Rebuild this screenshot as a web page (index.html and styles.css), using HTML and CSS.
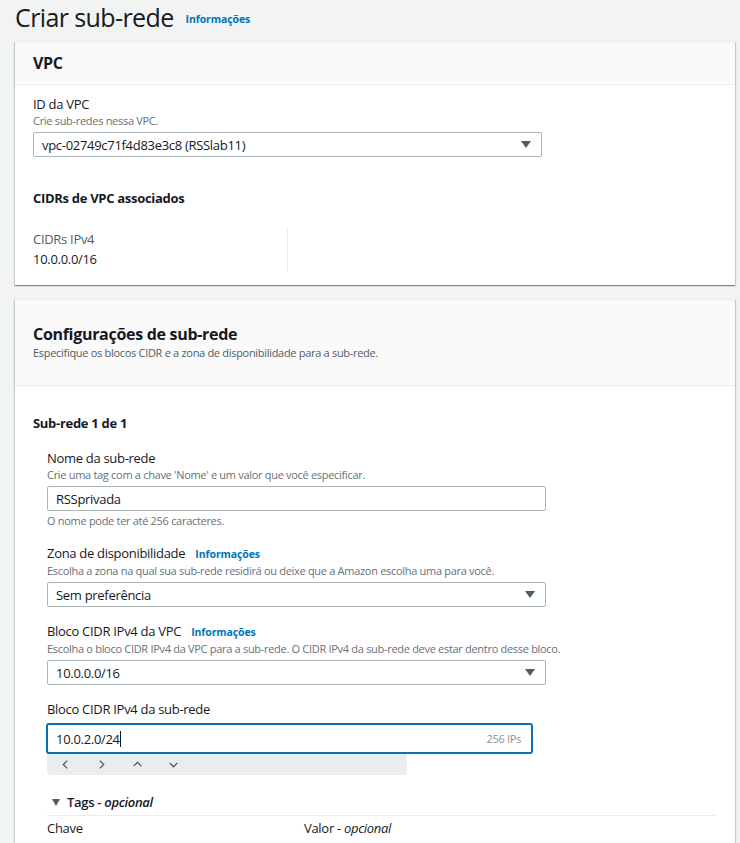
FILE: index.html
```html
<!DOCTYPE html>
<html lang="pt-BR">
<head>
<meta charset="utf-8">
<title>Criar sub-rede</title>
<link rel="stylesheet" href="styles.css">
</head>
<body>
<div class="page">
  <h1 class="title">Criar sub-rede <a class="info">Informações</a></h1>

  <section class="panel panel-vpc">
    <header class="panel-head"><h2>VPC</h2></header>
    <div class="panel-body">
      <div class="field">
        <div class="label">ID da VPC</div>
        <div class="desc">Crie sub-redes nessa VPC.</div>
        <div class="select"><span>vpc-02749c71f4d83e3c8 (RSSlab11)</span><i class="caret"></i></div>
      </div>
      <h3 class="sub-title">CIDRs de VPC associados</h3>
      <div class="kv">
        <div class="kv-col">
          <div class="kv-key">CIDRs IPv4</div>
          <div class="kv-val">10.0.0.0/16</div>
        </div>
      </div>
    </div>
  </section>

  <section class="panel panel-cfg">
    <header class="panel-head tall">
      <h2>Configurações de sub-rede</h2>
      <div class="head-desc">Especifique os blocos CIDR e a zona de disponibilidade para a sub-rede.</div>
    </header>
    <div class="panel-body">
      <h3 class="sub-title subnet">Sub-rede 1 de 1</h3>
      <div class="subnet-fields">
        <div class="field">
          <div class="label">Nome da sub-rede</div>
          <div class="desc">Crie uma tag com a chave 'Nome' e um valor que você especificar.</div>
          <div class="input">RSSprivada</div>
          <div class="hint">O nome pode ter até 256 caracteres.</div>
        </div>
        <div class="field">
          <div class="label">Zona de disponibilidade <a class="info">Informações</a></div>
          <div class="desc">Escolha a zona na qual sua sub-rede residirá ou deixe que a Amazon escolha uma para você.</div>
          <div class="select"><span>Sem preferência</span><i class="caret"></i></div>
        </div>
        <div class="field">
          <div class="label">Bloco CIDR IPv4 da VPC <a class="info">Informações</a></div>
          <div class="desc">Escolha o bloco CIDR IPv4 da VPC para a sub-rede. O CIDR IPv4 da sub-rede deve estar dentro desse bloco.</div>
          <div class="select"><span>10.0.0.0/16</span><i class="caret"></i></div>
        </div>
        <div class="field">
          <div class="label">Bloco CIDR IPv4 da sub-rede</div>
          <div class="input focus"><span>10.0.2.0/24<span class="cursor"></span></span><span class="ips">256 IPs</span></div>
          <div class="stepper">
            <svg viewBox="0 0 10 10"><path d="M6.5 1.5 3 5l3.5 3.5"/></svg>
            <svg viewBox="0 0 10 10"><path d="M3.5 1.5 7 5 3.5 8.5"/></svg>
            <svg viewBox="0 0 10 10"><path d="M1.5 6.5 5 3l3.5 3.5"/></svg>
            <svg viewBox="0 0 10 10"><path d="M1.5 3.5 5 7l3.5-3.5"/></svg>
          </div>
        </div>
        <div class="tags">
          <div class="tags-head"><i class="tri"></i><b>Tags - <em>opcional</em></b></div>
          <div class="tags-row">
            <div class="tags-col">Chave</div>
            <div class="tags-col">Valor - <em>opcional</em></div>
          </div>
        </div>
      </div>
    </div>
  </section>
</div>
</body>
</html>
```

FILE: styles.css
```css
* { box-sizing: border-box; }
html, body { margin: 0; padding: 0; }
body {
  background: #f2f3f3;
  color: #16191f;
  font-family: "Open Sans", "Noto Sans", sans-serif;
  font-size: 13px;
  letter-spacing: -0.3px;
  overflow: hidden;
}
.page { padding: 0 5px 0 15px; }
.title {
  margin: 0;
  font-size: 25px;
  font-weight: 400;
  line-height: 34px;
  height: 41px;
  letter-spacing: -0.6px;
}
.info {
  color: #0073bb;
  font-size: 10.5px;
  font-weight: 700;
  margin-left: 6px;
  vertical-align: 4px;
  letter-spacing: -0.1px;
}
.panel {
  background: #fff;
  box-shadow: 0 1px 1px 0 rgba(0,28,36,.3), 1px 1px 1px 0 rgba(0,28,36,.15), -1px 1px 1px 0 rgba(0,28,36,.15);
  border-top: 1px solid #eaeded;
}
.panel-head {
  background: #fafafa;
  border-bottom: 1px solid #eaeded;
  padding: 0 18px;
  height: 43px;
  display: flex;
  flex-direction: column;
  justify-content: center;
}
.panel-head h2 { margin: 0; font-size: 16px; font-weight: 700; line-height: 20px; }
.panel-head.tall { height: 86px; padding-top: 23px; justify-content: flex-start; }
.panel-head.tall h2 { line-height: 22px; }
.head-desc { font-size: 11px; color: #545b64; line-height: 16px; letter-spacing: -0.3px; }
.panel-body { padding: 10px 18px 16px; }
.panel-vpc { height: 244px; }
.panel-cfg { margin-top: 14px; }
.field { margin-bottom: 15px; }
.label { font-size: 13px; line-height: 18px; }
.label .info { vertical-align: 0; margin-left: 7px; }
.desc { font-size: 11px; color: #687078; line-height: 16px; margin-bottom: 3px; letter-spacing: -0.3px; }
.select, .input {
  width: 509px;
  height: 25px;
  border: 1px solid #aab7b8;
  border-radius: 2px;
  padding: 0 10px 0 8px;
  display: flex;
  align-items: center;
  justify-content: space-between;
  font-size: 13px;
}
.subnet-fields .select, .subnet-fields .input { width: 499px; }
.caret {
  width: 0; height: 0;
  border-left: 5px solid transparent;
  border-right: 5px solid transparent;
  border-top: 7px solid #545b64;
}
.sub-title { margin: 0; font-size: 13px; font-weight: 700; line-height: 18px; }
.panel-vpc .sub-title { margin-top: 32px; }
.kv { display: flex; margin-top: 21px; }
.kv-col { width: 255px; border-right: 1px solid #eaeded; padding: 1px 0 3px; }
.kv-key { color: #545b64; line-height: 20px; }
.kv-val { line-height: 20px; }
.subnet { margin-top: 18px; }
.subnet-fields { padding-left: 14px; margin-top: 17px; }
.hint { font-size: 11px; color: #687078; line-height: 16px; margin-top: 2px; margin-bottom: 14px; letter-spacing: -0.3px; }
.subnet-fields .input.focus {
  width: 487px;
  height: 31px;
  border: 2px solid #0a70b3;
  border-radius: 3px;
  margin-left: -1px;
  margin-top: 5px;
}
.cursor { display: inline-block; width: 1px; height: 16px; background: #16191f; vertical-align: -3px; }
.ips { color: #879596; font-size: 11px; }
.stepper {
  width: 360px;
  height: 21px;
  background: #eaeded;
  display: flex;
  align-items: center;
  gap: 25px;
  padding-left: 13px;
  border-radius: 0 0 3px 3px;
}
.stepper svg { width: 11px; height: 11px; fill: none; stroke: #545b64; stroke-width: 1.2; }
.tags { margin-top: 18px; }
.tags-head { display: flex; align-items: center; font-size: 13px; padding-left: 5px; height: 18px; }
.tags-head em, .tags-row em { font-style: italic; }
.tags-head b { font-weight: 600; }
.tri {
  width: 0; height: 0;
  border-left: 4px solid transparent;
  border-right: 4px solid transparent;
  border-top: 7px solid #545b64;
  margin-right: 7px;
}
.tags-row {
  display: flex;
  border-top: 1px solid #eaeded;
  margin-top: 4px;
  padding-top: 3px;
  width: 669px;
}
.tags-col { width: 257px; line-height: 18px; }
```
